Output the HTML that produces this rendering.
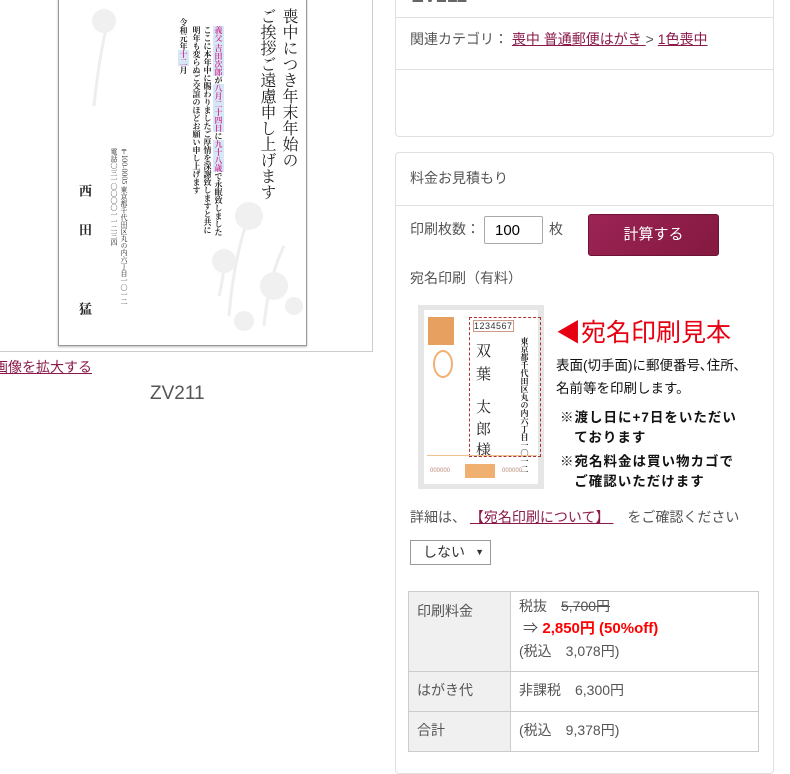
<!DOCTYPE html>
<html><head><meta charset="utf-8"><style>
body{margin:0;width:790px;height:761px;overflow:hidden;background:#fff;font-family:"Liberation Sans","Noto Sans CJK JP",sans-serif;color:#555;font-size:14px;position:relative}
.a{position:absolute}
a{color:#8b1a4a;text-decoration:underline}
.v{writing-mode:vertical-rl;position:absolute;font-family:"Noto Serif CJK SC","Noto Sans CJK JP",serif;color:#222;white-space:nowrap}
table{border-collapse:collapse}
td{border:1px solid #ccc;vertical-align:top;padding:5px 8px;font-size:14px;line-height:23px}
.n{position:absolute;left:476px;font-size:15px;font-family:'Noto Serif CJK SC',serif;color:#222;line-height:18px}
</style></head><body>
<div class="a" style="left:-10px;top:-10px;width:381px;height:360px;border:1px solid #ccc"></div>
<div class="a" style="left:58px;top:-5px;width:247px;height:349px;border:1px solid #999;box-shadow:0 1px 2px #bbb;background:#fff;overflow:hidden">
 <svg class="a" style="left:0;top:0" width="247" height="349">
  <g fill="none" stroke="#eee" stroke-width="3">
   <path d="M35 110 Q40 60 50 20"/><path d="M170 320 Q175 260 190 220"/><path d="M205 330 Q210 280 225 250"/><path d="M160 300 Q165 280 165 265"/>
  </g>
  <g fill="#f0f0f0"><circle cx="45" cy="25" r="12"/><circle cx="190" cy="220" r="14"/><circle cx="215" cy="290" r="14"/><circle cx="165" cy="265" r="12"/><circle cx="235" cy="310" r="9"/><circle cx="185" cy="325" r="10"/></g>
 </svg>
 <div class="v" style="left:198px;top:12px;font-size:16px;line-height:22px">喪中につき年末年始の<br>ご挨拶ご遠慮申し上げます</div>
 <div class="v" style="left:132px;top:30px;font-size:8px;line-height:11px;font-weight:bold"><span style="color:#d3379a;background:#d6e8f5">義父 吉田次郎</span>が<span style="color:#d3379a;background:#d6e8f5">八月二十四日</span>に<span style="color:#d3379a;background:#d6e8f5">九十八歳</span>で永眠致しました<br>ここに本年中に賜わりましたご厚情を深謝致しますと共に<br>明年も変らぬご交誼のほどお願い申し上げます</div>
 <div class="v" style="left:119px;top:22px;font-size:8px;line-height:11px;font-weight:bold">令和元年<span style="background:#d6e8f5;color:#d3379a">十二</span>月</div>
 <div class="v" style="left:50px;top:152px;font-size:7px;line-height:10px">〒100-0005 東京都千代田区丸の内六丁目一〇一二<br>電話〇三一〇〇〇〇一一二三四</div>
 <div class="v" style="left:18px;top:188px;font-size:13px;font-weight:bold;line-height:16px">西</div>
 <div class="v" style="left:18px;top:227px;font-size:13px;font-weight:bold;line-height:16px">田</div>
 <div class="v" style="left:18px;top:306px;font-size:13px;font-weight:bold;line-height:16px">猛</div>
</div>
<div class="a" style="left:-6px;top:357px;font-size:14px"><a>画像を拡大する</a></div>
<div class="a" style="left:150px;top:383px;font-size:19px;color:#555">ZV211</div>

<div class="a" style="left:395px;top:-10px;width:377px;height:145px;border:1px solid #e0e0e0;border-radius:4px"></div>
<div class="a" style="left:412px;top:-14px;font-size:19px;font-weight:bold;color:#666">ZV211</div>
<div class="a" style="left:396px;top:17px;width:377px;border-top:1px solid #e0e0e0"></div>
<div class="a" style="left:410px;top:29px">関連カテゴリ： <a>喪中 普通郵便はがき </a> &gt; <a>1色喪中</a></div>
<div class="a" style="left:396px;top:69px;width:377px;border-top:1px solid #e0e0e0"></div>

<div class="a" style="left:395px;top:152px;width:377px;height:620px;border:1px solid #e0e0e0;border-radius:4px"></div>
<div class="a" style="left:410px;top:168px">料金お見積もり</div>
<div class="a" style="left:396px;top:205px;width:377px;border-top:1px solid #e0e0e0"></div>
<div class="a" style="left:410px;top:219px">印刷枚数：</div>
<div class="a" style="left:484px;top:216px;width:59px;height:28px;border:1px solid #aaa;border-radius:2px;color:#000;font-size:15px;line-height:27px;box-sizing:border-box;padding-left:10px">100</div>
<div class="a" style="left:549px;top:219px">枚</div>
<div class="a" style="left:588px;top:214px;width:131px;height:42px;background:linear-gradient(135deg,#9c2456,#84193f);border:1px solid #6d1434;border-radius:3px;box-sizing:border-box;color:#fff;font-size:15px;text-align:center;line-height:40px">計算する</div>
<div class="a" style="left:410px;top:268px">宛名印刷（有料）</div>

<div class="a" style="left:418px;top:305px;width:126px;height:184px;background:#e6e6e6"></div>
<div class="a" style="left:424px;top:310px;width:114px;height:174px;background:#fff"></div>
<div class="a" style="left:428px;top:317px;width:26px;height:28px;background:#e8a060"></div>
<div class="a" style="left:433px;top:350px;width:16px;height:24px;border-radius:50%;border:2px solid #f0b070"></div>
<div class="a" style="left:469px;top:317px;width:70px;height:138px;border:1px dashed #b03030"></div>
<div class="a" style="left:473px;top:320px;font-size:9px;color:#333;letter-spacing:0.5px;border:1px solid #c98">1234567</div>
<div class="n" style="top:342px">双</div>
<div class="n" style="top:365px">葉</div>
<div class="n" style="top:398px">太</div>
<div class="n" style="top:420px">郎</div>
<div class="n" style="top:441px">様</div>
<div class="v" style="left:519px;top:337px;font-size:8px;font-weight:bold">東京都千代田区丸の内六丁目一〇一二</div>
<div class="a" style="left:427px;top:455px;width:110px;height:25px;border-top:1px solid #f0c090"></div>
<div class="a" style="left:430px;top:468px;font-size:6px;color:#b87">000000</div>
<div class="a" style="left:465px;top:464px;width:30px;height:14px;background:#f0b070"></div>
<div class="a" style="left:502px;top:468px;font-size:6px;color:#b87">000000</div>
<div class="a" style="left:556px;top:313px;font-size:25px;color:#e60012">◀宛名印刷見本</div>
<div class="a" style="left:556px;top:354px;font-size:13.5px;color:#111;line-height:23px">表面(切手面)に郵便番号､住所､<br>名前等を印刷します。</div>
<div class="a" style="left:560px;top:408px;font-size:13.5px;color:#111;font-weight:bold;line-height:20px;letter-spacing:1px">※渡し日に+7日をいただい<br>&nbsp;&nbsp;&nbsp;ております<br><span style="display:block;height:4px"></span>※宛名料金は買い物カゴで<br>&nbsp;&nbsp;&nbsp;ご確認いただけます</div>

<div class="a" style="left:410px;top:507px">詳細は、 <a>【宛名印刷について】 </a>　をご確認ください</div>
<div class="a" style="left:410px;top:540px;width:81px;height:25px;border:1px solid #999;box-sizing:border-box;color:#333;font-size:14px;line-height:23px;padding-left:12px">しない<span style="position:absolute;right:6px;font-size:9px">▼</span></div>

<table class="a" style="left:408px;top:591px;width:351px">
<tr style="height:80px"><td style="width:85px;background:#f0f0f0;padding-top:8px">印刷料金</td><td style="padding-top:3px;line-height:22px"><span>税抜　<s>5,700円</s></span><br><b style="color:#f00;font-size:15px">&nbsp;<span style="font-weight:normal;color:#555">⇒</span> 2,850円 (50%off)</b><br>(税込　3,078円)</td></tr>
<tr style="height:40px"><td style="background:#f0f0f0;padding:7px 8px">はがき代</td><td style="padding:7px 8px">非課税　6,300円</td></tr>
<tr style="height:40px"><td style="background:#f0f0f0;padding:7px 8px">合計</td><td style="padding:7px 8px">(税込　9,378円)</td></tr>
</table>
</body></html>
